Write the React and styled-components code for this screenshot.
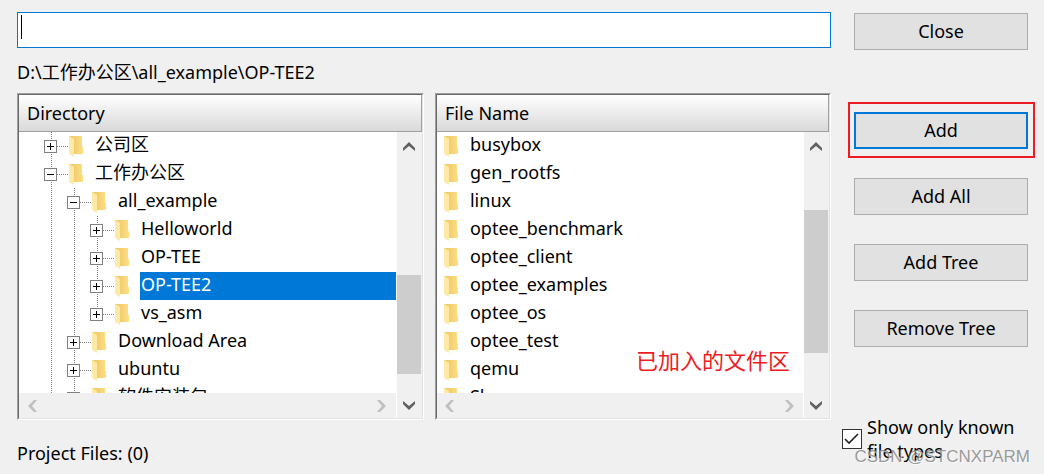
import React, { useId, useState } from "react";
import styled, { createGlobalStyle, css } from "styled-components";

const FONT = '"Noto Sans", "Noto Sans CJK SC", sans-serif';

const COLOR = {
  FACE: "#f0f0f0",
  BUTTON: "#e1e1e1",
  BORDER: "#adadad",
  ACCENT: "#0078d7",
  MARK: "#ed1c24",
  THUMB: "#cdcdcd",
};

const TREE = [
  { name: "公司区", level: 0 },
  { name: "工作办公区", level: 0, open: true },
  { name: "all_example", level: 1, open: true },
  { name: "Helloworld", level: 2 },
  { name: "OP-TEE", level: 2 },
  { name: "OP-TEE2", level: 2 },
  { name: "vs_asm", level: 2, last: true },
  { name: "Download Area", level: 1 },
  { name: "ubuntu", level: 1 },
  { name: "软件安装包", level: 1 },
];

const FILES = [
  "busybox",
  "gen_rootfs",
  "linux",
  "optee_benchmark",
  "optee_client",
  "optee_examples",
  "optee_os",
  "optee_test",
  "qemu",
  "Share",
];

const ARROWS = {
  up: "M0 9V6L6 0L12 6V9L6 4Z",
  down: "M0 0V3L6 9L12 3V0L6 5Z",
  left: "M9 0H6L0 6L6 12H9L4 6Z",
  right: "M0 0H3L9 6L3 12H0L5 6Z",
};

function Arrow({ dir }) {
  const vertical = dir === "up" || dir === "down";
  return (
    <svg
      width={vertical ? 12 : 9}
      height={vertical ? 9 : 12}
      fill={vertical ? "#606060" : "#bfbfbf"}
      aria-hidden="true"
    >
      <path d={ARROWS[dir]} />
    </svg>
  );
}

function Folder() {
  const id = useId();
  return (
    <FolderSvg width="14" height="21" viewBox="0 0 14 21" aria-hidden="true">
      <linearGradient id={id}>
        <stop offset="0.3" stopColor="#f0cc6c" />
        <stop offset="1" stopColor="#fddf85" />
      </linearGradient>
      <path d="M0 0H13V11H14V18H0Z" fill={`url(#${id})`} />
      <path d="M0 0L5 3V21L0 18Z" fill="#ffe9a6" />
    </FolderSvg>
  );
}

function VerticalBar({ before, size }) {
  return (
    <VBar>
      <ArrowButton aria-label="Scroll up" $tall>
        <Arrow dir="up" />
      </ArrowButton>
      <Track>
        <Thumb $before={before} $size={size} />
      </Track>
      <ArrowButton aria-label="Scroll down">
        <Arrow dir="down" />
      </ArrowButton>
    </VBar>
  );
}

function Panel({ title, weight, before, size, note, children }) {
  return (
    <Frame $weight={weight}>
      <Header>{title}</Header>
      <Body>
        <Content>
          <List>{children}</List>
          <HBar>
            <ArrowButton aria-label="Scroll left" disabled>
              <Arrow dir="left" />
            </ArrowButton>
            <ArrowButton aria-label="Scroll right" disabled>
              <Arrow dir="right" />
            </ArrowButton>
          </HBar>
        </Content>
        <VerticalBar before={before} size={size} />
      </Body>
      {note && <Note>{note}</Note>}
    </Frame>
  );
}

function App() {
  const [name, setName] = useState("");
  const [current, setCurrent] = useState("OP-TEE2");
  const [knownOnly, setKnownOnly] = useState(true);

  return (
    <>
      <GlobalStyle />
      <Dialog>
        <Main>
          <Field>
            <NameInput
              aria-label="File name"
              value={name}
              onChange={(e) => setName(e.target.value)}
            />
            {!name && <Caret />}
          </Field>
          <Path>D:\工作办公区\all_example\OP-TEE2</Path>
          <Panels>
            <Panel title="Directory" weight={407} before={115} size={99}>
              {TREE.map((item) => (
                <Row key={item.name}>
                  <Indent>
                    {Array.from({ length: item.level }, (_, i) => (
                      <Guide key={i} />
                    ))}
                    <Guide $last={item.last}>
                      <Stem />
                      <Toggle aria-label={item.open ? "Collapse" : "Expand"}>
                        <svg width="11" height="11" aria-hidden="true">
                          <path
                            d={item.open ? "M2 5.5H9" : "M2 5.5H9M5.5 2V9"}
                            stroke="#000"
                          />
                        </svg>
                      </Toggle>
                    </Guide>
                  </Indent>
                  <IconCell>
                    <Folder />
                  </IconCell>
                  <Label
                    $selected={item.name === current}
                    onClick={() => setCurrent(item.name)}
                  >
                    {item.name}
                  </Label>
                </Row>
              ))}
            </Panel>
            <Panel
              title="File Name"
              weight={396}
              before={50}
              size={143}
              note="已加入的文件区"
            >
              {FILES.map((file) => (
                <Row key={file}>
                  <IconCell>
                    <Folder />
                  </IconCell>
                  <Label>{file}</Label>
                </Row>
              ))}
            </Panel>
          </Panels>
          <Status>Project Files: (0)</Status>
        </Main>

        <Side>
          <Actions>
            <Button>Close</Button>
          </Actions>
          <Actions>
            <Marked>
              <Button $primary>Add</Button>
            </Marked>
            <Button>Add All</Button>
            <Button>Add Tree</Button>
            <Button>Remove Tree</Button>
          </Actions>
          <CheckLabel>
            <Checkbox
              type="checkbox"
              checked={knownOnly}
              onChange={() => setKnownOnly((prev) => !prev)}
            />
            <span>Show only known file types</span>
          </CheckLabel>
        </Side>
        <Watermark>CSDN @STCNXPARM</Watermark>
      </Dialog>
    </>
  );
}

export default App;

const GlobalStyle = createGlobalStyle`
  * {
    box-sizing: border-box;
  }

  body {
    margin: 0;
    background: ${COLOR.FACE};
    color: #000;
    font: 18px/24px ${FONT};
  }

  button, input {
    font: inherit;
    color: inherit;
  }
`;

const Dialog = styled.div`
  position: relative;
  display: grid;
  grid-template-columns: minmax(0, 1fr) 202px;
  column-gap: 11px;
  padding: 12px 0 8px 17px;
`;

const Main = styled.main`
  display: flex;
  flex-direction: column;
`;

const Field = styled.div`
  position: relative;
`;

const NameInput = styled.input`
  display: block;
  width: 100%;
  height: 36px;
  padding: 0 4px;
  border: 1px solid ${COLOR.ACCENT};
  outline: none;
  background: #fff;
`;

const Caret = styled.span`
  position: absolute;
  left: 4px;
  top: 3px;
  width: 1px;
  height: 24px;
  background: #000;
`;

const Path = styled.div`
  margin: 12px 0 9px;
`;

const Panels = styled.div`
  display: flex;
  gap: 11px;
`;

const Frame = styled.section`
  position: relative;
  flex: ${(props) => props.$weight} 1 0;
  min-width: 0;
  border: 1px solid;
  border-color: #a0a0a0 #fff #fff #a0a0a0;

  &::before {
    content: "";
    position: absolute;
    inset: 0;
    border: 1px solid;
    border-color: #696969 #e3e3e3 #e3e3e3 #696969;
    pointer-events: none;
  }
`;

const Header = styled.div`
  height: 37px;
  margin: 1px 1px 0;
  padding: 6px 8px;
  border: solid #a0a0a0;
  border-width: 0 1px 1px 0;
  background: linear-gradient(#fff, #d9d9d9);
`;

const Body = styled.div`
  display: flex;
  gap: 1px;
  margin: 0 1px 1px;
  background: #fff;
`;

const Content = styled.div`
  flex: 1;
  min-width: 0;
`;

const List = styled.div`
  height: 261px;
  overflow: hidden;
`;

const Row = styled.div`
  display: flex;
  height: 28px;
  white-space: nowrap;
`;

const Indent = styled.div`
  display: flex;
  padding-left: 20px;
`;

const Guide = styled.div`
  position: relative;
  width: 23px;
  padding: 8px 0 0 5px;
  background: repeating-linear-gradient(#808080 0 1px, transparent 1px 2px)
    12px 0 / 1px ${(props) => (props.$last ? "14px" : "28px")} no-repeat;
`;

const Stem = styled.span`
  position: absolute;
  left: 18px;
  top: 14px;
  width: 12px;
  height: 1px;
  background: repeating-linear-gradient(
    90deg,
    #808080 0 1px,
    transparent 1px 2px
  );
`;

const Toggle = styled.button`
  display: block;
  width: 13px;
  height: 13px;
  padding: 0;
  border: 1px solid #808080;
  background: #fff;

  svg {
    display: block;
  }
`;

const IconCell = styled.div`
  width: 32px;
  padding: 4px 0 0 7px;
`;

const FolderSvg = styled.svg`
  display: block;
`;

const Label = styled.div`
  flex: 1;
  padding-left: 1px;
  line-height: 24px;

  ${(props) =>
    props.$selected &&
    css`
      background: ${COLOR.ACCENT};
      color: #fff;
    `}
`;

const HBar = styled.div`
  display: flex;
  justify-content: space-between;
  height: 25px;
  padding: 0 2px 0 1px;
  background: ${COLOR.FACE};
`;

const VBar = styled.div`
  display: flex;
  flex-direction: column;
  width: 25px;
  background: ${COLOR.FACE};
`;

const ArrowButton = styled.button`
  display: flex;
  align-items: center;
  justify-content: center;
  width: 24px;
  height: ${(props) => (props.$tall ? 28 : 25)}px;
  padding: 0;
  border: 0;
  background: none;
`;

const Track = styled.div`
  flex: 1;
`;

const Thumb = styled.div`
  width: 24px;
  height: ${(props) => props.$size}px;
  margin-top: ${(props) => props.$before}px;
  background: ${COLOR.THUMB};
`;

const Note = styled.span`
  position: absolute;
  right: 40px;
  bottom: 43px;
  color: ${COLOR.MARK};
  font-size: 22px;
  line-height: 32px;
`;

const Status = styled.div`
  margin-top: 21px;
`;

const Side = styled.aside`
  display: flex;
  flex-direction: column;
  padding-top: 1px;
`;

const Actions = styled.div`
  display: flex;
  flex-direction: column;
  gap: 29px;
  padding: 0 16px 0 12px;

  & + & {
    margin-top: 62px;
  }
`;

const Button = styled.button`
  width: 100%;
  height: 37px;
  padding: 0 0 2px;
  border: ${(props) =>
    props.$primary
      ? `2px solid ${COLOR.ACCENT}`
      : `1px solid ${COLOR.BORDER}`};
  background: ${COLOR.BUTTON};
  line-height: 24px;
`;

const Marked = styled.div`
  position: relative;
  display: flex;

  &::after {
    content: "";
    position: absolute;
    inset: -10px -7px -9px -6px;
    border: 2px solid ${COLOR.MARK};
    pointer-events: none;
  }
`;

const CheckLabel = styled.label`
  display: flex;
  align-items: center;
  gap: 5px;
  margin-top: 68px;
  padding-right: 16px;
`;

const Checkbox = styled.input`
  flex: none;
  appearance: none;
  width: 20px;
  height: 20px;
  margin: 0;
  border: 1px solid #333;
  background: #fff;

  &:checked {
    background: #fff
      url("data:image/svg+xml,%3Csvg xmlns='http://www.w3.org/2000/svg' viewBox='0 0 18 18'%3E%3Cpath d='M2 9l4 4 9-9' fill='none' stroke='%23222' stroke-width='1.6'/%3E%3C/svg%3E");
  }
`;

const Watermark = styled.span`
  position: absolute;
  right: 14px;
  bottom: 4px;
  color: rgba(130, 130, 130, 0.8);
  font-family: "Liberation Sans", sans-serif;
  font-size: 17px;
  text-shadow: 1px 1px 0 rgba(255, 255, 255, 0.7);
  pointer-events: none;
`;
